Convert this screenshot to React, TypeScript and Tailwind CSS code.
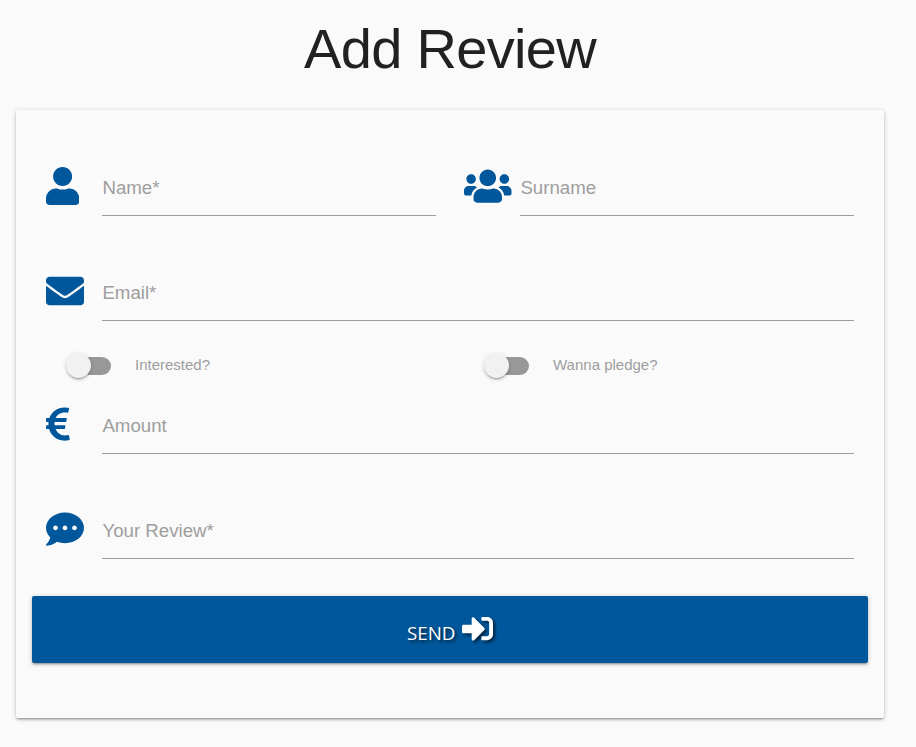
import type { ReactNode } from "react";
import { FaUser, FaUsers, FaEnvelope, FaEuroSign, FaCommentDots, FaSignInAlt } from "react-icons/fa";

function Field({ icon, label }: { icon: ReactNode; label: string }) {
  return (
    <div className="flex min-w-0 flex-1 items-start">
      <div className="w-14 shrink-0 text-[38px] text-[#01579b]">{icon}</div>
      <div className="h-[52px] flex-1 border-b border-[#9e9e9e] pl-[0.4px] pt-[13px] text-[18.7px] leading-[22px] text-[#9e9e9e]">
        {label}
      </div>
    </div>
  );
}

function Toggle({ label }: { label: string }) {
  return (
    <div className="flex flex-1 items-center pl-[20px]">
      <span className="flex h-[26px] w-[46px] items-center">
        <span className="ml-[5px] flex h-[18px] w-[40px] items-center rounded-full bg-[#989898]">
          <span className="-ml-[5px] mb-[1px] h-[25px] w-[25px] shrink-0 rounded-full bg-[#f1f1f1] shadow-[0_3px_1px_-2px_rgba(0,0,0,0.2),0_2px_2px_0_rgba(0,0,0,0.14),0_1px_5px_0_rgba(0,0,0,0.12)]" />
        </span>
      </span>
      <span className="mb-[2px] ml-[23px] text-[15px] leading-[20px] text-[#9e9e9e]">{label}</span>
    </div>
  );
}

export default function App() {
  return (
    <div className="h-[747px] bg-[#fafafa] pl-4 font-['Liberation_Sans',Arial,sans-serif]">
      <div className="w-[868px]">
        <h1 className="h-[110px] pt-[17px] text-center text-[56px] leading-[64px] tracking-[-0.7px] text-[#212121]">
          Add Review
        </h1>
        <form className="h-[608px] rounded-[2px] px-4 pt-[54px] shadow-[0_2px_2px_0_rgba(0,0,0,0.14),0_3px_1px_-2px_rgba(0,0,0,0.12),0_1px_5px_0_rgba(0,0,0,0.2)]">
          <div className="px-[14px]">
            <div className="flex gap-[28px]">
              <Field icon={<FaUser className="mt-[3px] w-[33.25px]" />} label="Name*" />
              <Field icon={<FaUsers className="mt-[3px] w-[47.5px]" />} label="Surname" />
            </div>
            <div className="mt-[53px] flex">
              <Field icon={<FaEnvelope className="mt-[3px]" />} label="Email*" />
            </div>
            <div className="mt-[32px] flex h-[26px] gap-[28px]">
              <Toggle label="Interested?" />
              <Toggle label="Wanna pledge?" />
            </div>
            <div className="mt-[23px] flex">
              <Field icon={<FaEuroSign className="mt-[3px] w-[23.75px]" />} label="Amount" />
            </div>
            <div className="mt-[53px] flex">
              <Field icon={<FaCommentDots className="mt-[3px]" />} label="Your Review*" />
            </div>
          </div>
          <button
            type="button"
            className="mt-[37px] flex h-[67px] w-full items-center justify-center rounded-[2px] bg-[#01579b] text-white shadow-[0_2px_2px_0_rgba(0,0,0,0.14),0_3px_1px_-2px_rgba(0,0,0,0.12),0_1px_5px_0_rgba(0,0,0,0.2)]"
          >
            <span className="mt-[7px] font-['Open_Sans','Noto_Sans',sans-serif] text-[18.8px] leading-[24px] [text-shadow:2px_2px_3px_rgba(0,0,0,0.6)]">
              SEND
            </span>
            <FaSignInAlt className="mb-[2px] ml-[6.5px] text-[31px] drop-shadow-[2px_2px_1.5px_rgba(0,0,0,0.6)]" />
          </button>
        </form>
      </div>
    </div>
  );
}
